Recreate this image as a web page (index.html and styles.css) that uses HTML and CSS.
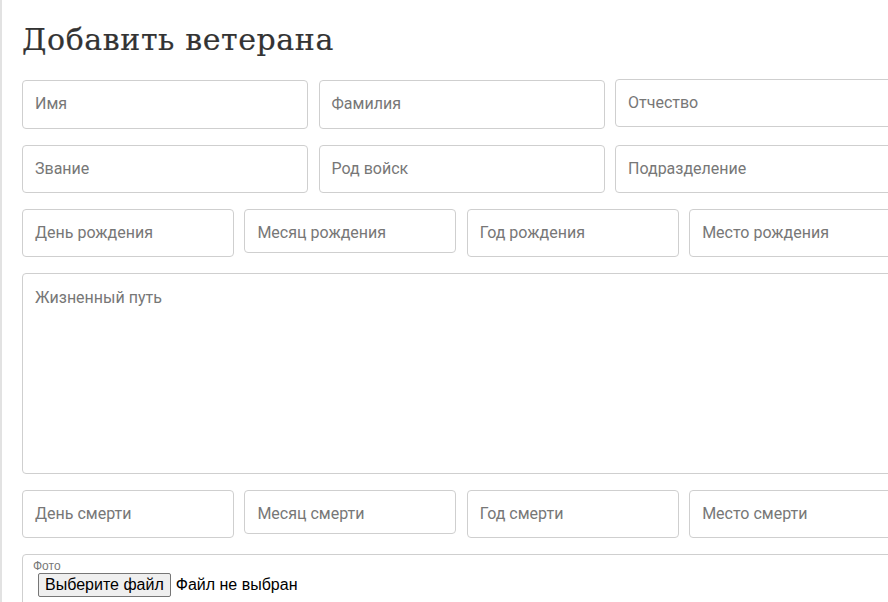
FILE: index.html
```html
<!DOCTYPE html>
<html lang="ru">
<head>
<meta charset="utf-8">
<link rel="stylesheet" href="styles.css">
</head>
<body>
<div class="page">
  <h1 class="title">Добавить ветерана</h1>
  <form class="form">
    <div class="row row-3 row-first">
      <div class="field"><span class="ph">Имя</span></div>
      <div class="field"><span class="ph">Фамилия</span></div>
      <div class="field field-up"><span class="ph">Отчество</span></div>
    </div>
    <div class="row row-3">
      <div class="field"><span class="ph">Звание</span></div>
      <div class="field"><span class="ph">Род войск</span></div>
      <div class="field"><span class="ph">Подразделение</span></div>
    </div>
    <div class="row row-4">
      <div class="field"><span class="ph">День рождения</span></div>
      <div class="field field-short"><span class="ph">Месяц рождения</span></div>
      <div class="field"><span class="ph">Год рождения</span></div>
      <div class="field"><span class="ph">Место рождения</span></div>
    </div>
    <div class="area"><span class="ph">Жизненный путь</span></div>
    <div class="row row-4">
      <div class="field"><span class="ph">День смерти</span></div>
      <div class="field field-short"><span class="ph">Месяц смерти</span></div>
      <div class="field"><span class="ph">Год смерти</span></div>
      <div class="field"><span class="ph">Место смерти</span></div>
    </div>
    <div class="photo">
      <div class="photo-label">Фото</div>
      <div class="file">
        <span class="file-btn">Выберите файл</span>
        <span class="file-name">Файл не выбран</span>
      </div>
    </div>
  </form>
</div>
</body>
</html>
```
FILE: styles.css
```css
html, body {
  margin: 0;
  padding: 0;
  background: #fff;
  overflow: hidden;
}
body {
  width: 888px;
  height: 602px;
}
.page {
  box-sizing: border-box;
  height: 602px;
  width: 901px;
  border-left: 2px solid #e2e2e2;
  padding: 20px 0 0 20px;
}
.title {
  margin: 0 0 20px 0;
  font-family: "DejaVu Serif", serif;
  font-weight: normal;
  font-size: 30px;
  line-height: 40px;
  color: #333;
  letter-spacing: 0.6px;
  -webkit-text-stroke: 0.2px #333;
}
.form {
  display: flex;
  flex-direction: column;
  gap: 16px;
}
.row {
  display: grid;
  gap: 10.5px;
  align-items: start;
}
.row-3 { grid-template-columns: repeat(3, 1fr); }
.row-4 { grid-template-columns: repeat(4, 1fr); }
.field, .area, .photo {
  box-sizing: border-box;
  border: 1px solid #cfcfcf;
  border-radius: 4px;
  background: #fff;
}
.field {
  height: 48px;
  display: flex;
  align-items: flex-start;
  padding: 13px 12px 0 12px;
}
.row-first .field { height: 49px; }
.row-first .field-up { height: 48px; margin-top: -1px; }
.field-short { height: 44px; }
.ph {
  font-family: Roboto, "Noto Sans", sans-serif;
  font-size: 16px;
  color: #777;
  white-space: nowrap;
}
.area {
  height: 201px;
  padding: 14px 12px;
}
.photo {
  height: 60px;
  padding: 5px 10px 0 10px;
  border-radius: 4px 0 0 0;
}
.photo-label {
  font-family: "Liberation Sans", Arial, sans-serif;
  font-size: 12px;
  line-height: 13px;
  color: #777;
}
.file {
  display: flex;
  align-items: center;
  gap: 5px;
  padding-left: 5px;
}
.file-btn {
  box-sizing: border-box;
  height: 24px;
  padding: 0 6px;
  display: inline-flex;
  align-items: center;
  font-family: "Liberation Sans", Arial, sans-serif;
  font-size: 16px;
  color: #000;
  background: #efefef;
  border: 1px solid #767676;
  border-radius: 2px;
}
.file-name {
  font-family: "Liberation Sans", Arial, sans-serif;
  font-size: 16px;
  color: #000;
}
```
